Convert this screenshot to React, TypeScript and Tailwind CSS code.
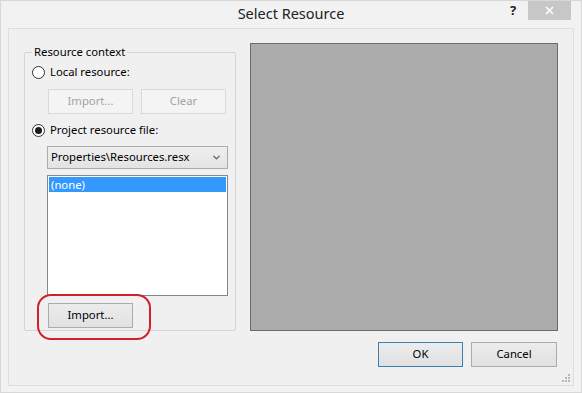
import { ChevronDown } from 'lucide-react';

const font = { fontFamily: '"Noto Sans", "Open Sans", sans-serif' };

function Radio({ checked, label }: { checked?: boolean; label: string }) {
  return (
    <div className="flex items-center h-[16px]">
      <span className="w-[13px] h-[13px] rounded-full border border-[#333] bg-white flex items-center justify-center">
        {checked && <span className="w-[7px] h-[7px] rounded-full bg-[#1b1b1b]" />}
      </span>
      <span className="ml-[5px] text-[11.3px] text-black leading-none">{label}</span>
    </div>
  );
}

function Btn({ children, disabled, primary, className = '' }: { children: string; disabled?: boolean; primary?: boolean; className?: string }) {
  const look = disabled
    ? 'border-[#d9d9d9] bg-[#f4f4f4] text-[#a3a3a3]'
    : primary
      ? 'border-[#3c7fb1] bg-gradient-to-b from-[#ececec] to-[#e1e1e1] text-black'
      : 'border-[#acacac] bg-gradient-to-b from-[#ececec] to-[#e1e1e1] text-black';
  return (
    <div className={`flex items-center justify-center border text-[11.3px] ${look} ${className}`}>
      {children}
    </div>
  );
}

export default function App() {
  return (
    <div className="w-[582px] h-[393px] bg-[#f2f2f2] border border-[#d8d8d8] flex flex-col overflow-hidden" style={font}>
      {/* title bar */}
      <div className="h-[27px] flex items-start relative">
        <div className="flex-1 text-center text-[14.5px] text-[#222] pt-[2px]">Select Resource</div>
        <span className="absolute left-[509px] top-[0px] text-[13px] font-bold text-[#222]">?</span>
        <div className="absolute left-[527px] top-[-1px] w-[43px] h-[20px] bg-[#c7c7c7] flex items-center justify-center">
          <svg width="9" height="9" viewBox="0 0 9 9">
            <path d="M1 1 L8 8 M8 1 L1 8" stroke="#fff" strokeWidth="1.6" />
          </svg>
        </div>
      </div>

      {/* client area */}
      <div className="mx-[7px] h-[358px] border border-[#dedede] bg-[#f0f0f0] flex flex-col px-[15px] pt-[14px] relative">
        <div className="flex gap-[14px]">
          {/* group box */}
          <div className="w-[212px] h-[288px] pt-[9px]">
            <div className="relative h-full border border-[#d5d5d5] rounded-[2px] pl-[7px] pt-[11px]">
              <span className="absolute -top-[9px] left-[7px] px-[2px] bg-[#f0f0f0] text-[11.3px] text-black leading-[16px]">Resource context</span>
              <Radio label="Local resource:" />
              <div className="flex gap-[8px] mt-[9px] ml-[16px]">
                <Btn disabled className="w-[85px] h-[25px]">Import...</Btn>
                <Btn disabled className="w-[85px] h-[25px]">Clear</Btn>
              </div>
              <div className="mt-[8px]">
                <Radio checked label="Project resource file:" />
              </div>
              <div className="mt-[8px] ml-[15px] w-[181px] h-[23px] border border-[#acacac] bg-gradient-to-b from-[#efefef] to-[#e3e3e3] flex items-center pl-[3px] pr-[5px] text-[11.3px] text-black">
                <span className="flex-1">Properties\Resources.resx</span>
                <ChevronDown size={11} strokeWidth={2.5} className="text-[#555]" />
              </div>
              <div className="mt-[6px] ml-[15px] w-[181px] h-[121px] border border-[#828790] bg-white p-[1px]">
                <div className="h-[15px] bg-[#3399ff] text-white text-[11.3px] leading-[15px] pl-[2px]">(none)</div>
              </div>
              <div className="relative mt-[7px] ml-[16px] w-[85px]">
                <Btn className="w-[85px] h-[25px]">Import...</Btn>
                <span className="absolute -left-[11px] -top-[9px] w-[114px] h-[46px] border-2 border-[#d0202a] rounded-[14px]" />
              </div>
            </div>
          </div>

          {/* preview */}
          <div className="w-[309px] h-[288px] bg-[#acacac] border border-[#6b6b6b]" />
        </div>

        <div className="flex justify-end gap-[8px] mt-[11px] pr-[1px]">
          <Btn primary className="w-[85px] h-[25px]">OK</Btn>
          <Btn className="w-[86px] h-[25px]">Cancel</Btn>
        </div>

        <svg className="absolute right-[2px] bottom-[2px]" width="9" height="9" viewBox="0 0 9 9">
          <rect x="6" y="0" width="2" height="2" fill="#b8b8b8" />
          <rect x="3" y="3" width="2" height="2" fill="#b8b8b8" />
          <rect x="6" y="3" width="2" height="2" fill="#b8b8b8" />
          <rect x="0" y="6" width="2" height="2" fill="#b8b8b8" />
          <rect x="3" y="6" width="2" height="2" fill="#b8b8b8" />
          <rect x="6" y="6" width="2" height="2" fill="#b8b8b8" />
        </svg>
      </div>
    </div>
  );
}
